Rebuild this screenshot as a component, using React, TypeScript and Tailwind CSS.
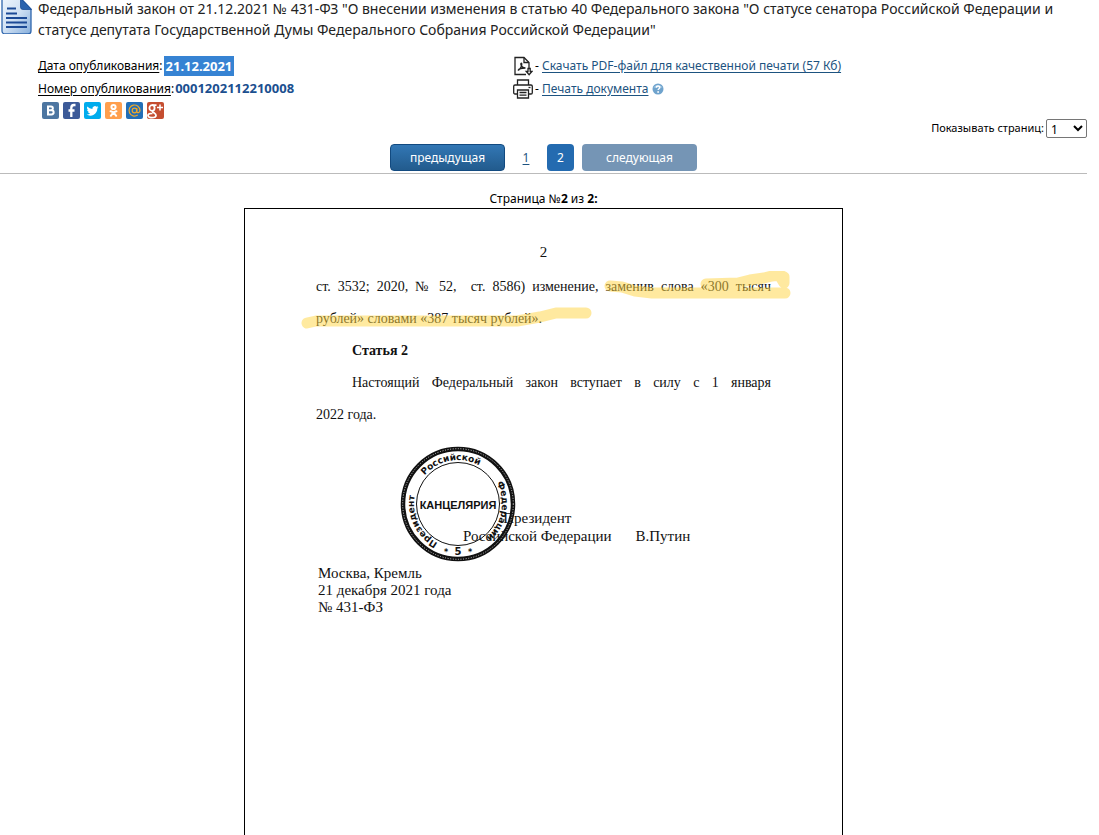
import { useState } from 'react';

function DocumentIcon() {
  return (
    <svg className="h-9 w-8 shrink-0" viewBox="0 0 32 36" fill="none" aria-hidden="true">
      <defs>
        <linearGradient id="sheet" x1="0" y1="0" x2="1" y2="1">
          <stop offset="0" stopColor="#eef5fc" />
          <stop offset="0.5" stopColor="#cfe0f3" />
          <stop offset="1" stopColor="#86aedb" />
        </linearGradient>
      </defs>
      <path d="M4 0.5H21L31 11V33a3 3 0 0 1-3 3H5a3 3 0 0 1-3-3V2.500a2 2 0 0 1 2-2Z" fill="url(#sheet)" stroke="#2f66ad" strokeWidth="1.300" />
      <path d="M20.500 0.500V9a2.500 2.500 0 0 0 2.500 2.500h8.500Z" fill="#2a63ae" stroke="#1c4f98" strokeWidth="0.800" />
      <path d="M7 10.500h9M6 15.500h11M6 20h21M6 24.500h21M6 29h21" stroke="#1c4a96" strokeWidth="2" />
    </svg>
  );
}

function PdfIcon() {
  return (
    <svg className="h-5 w-5 shrink-0" viewBox="0 0 20 20" fill="none" stroke="#222" strokeWidth="1.300" aria-hidden="true">
      <path d="M13 18.500H2V1.500h9l5 5V12" />
      <path d="M11 1.500v5h5" />
      <path d="M5 14.500c2-1 4-4.500 3.800-6.500-.2-1.300-1.300-.8-.9.500.5 2 2 3.500 4.600 3.500M5 14.500c1-2 4-2.500 7.500-2.500" />
      <path d="M15 12.500h2.200v3H19l-2.900 3.300-2.900-3.300H15Z" fill="#fff" />
    </svg>
  );
}

function PrinterIcon() {
  return (
    <svg className="h-5 w-5 shrink-0" viewBox="0 0 20 20" fill="none" stroke="#222" strokeWidth="1.300" aria-hidden="true">
      <path d="M4.500 6V1h11v5" />
      <path d="M4.500 15H2a1.300 1.300 0 0 1-1.300-1.300V7.300A1.300 1.300 0 0 1 2 6h16a1.300 1.300 0 0 1 1.300 1.300v6.400A1.300 1.300 0 0 1 18 15h-2.500" />
      <path d="M4.500 11h11v8h-11Z" />
      <path d="M6.500 13.500h7M6.500 16.200h7" />
      <path d="M15.500 8.500h2" />
    </svg>
  );
}

function HelpIcon() {
  return (
    <svg className="ml-0.5 h-3 w-3 shrink-0" viewBox="0 0 12 12" aria-hidden="true">
      <circle cx="6" cy="6" r="5.500" fill="#6fa3cd" />
      <path d="M1.500 4.500a5 4 0 0 1 9 0Z" fill="#a9cbe5" />
      <path d="M4.300 4.700c0-2.300 3.500-2.200 3.500-.2 0 1.300-1.700 1.300-1.700 2.600" fill="none" stroke="#fff" strokeWidth="1.400" />
      <circle cx="6.100" cy="9" r="0.900" fill="#fff" />
    </svg>
  );
}

const socials = [
  {
    name: 'ВКонтакте',
    color: '#4d76a1',
    icon: <path d="M6 4.500h3a1.800 1.800 0 0 1 0 3.700H6.500h3a2.100 2.100 0 0 1 0 4.300H6Z" fill="none" stroke="#fff" strokeWidth="2" />,
  },
  {
    name: 'Facebook',
    color: '#3c5a98',
    icon: <path d="M12.500 3H11C9 3 8.300 4.200 8.300 6v1.500M8.300 15V6M5.500 8.500h6" fill="none" stroke="#fff" strokeWidth="2.300" />,
  },
  {
    name: 'Twitter',
    color: '#00aced',
    icon: <path d="M14.500 5.200a5 5 0 0 1-1.400.4 2.500 2.500 0 0 0 1-1.400 5 5 0 0 1-1.500.6 2.500 2.500 0 0 0-4.200 2.200A7 7 0 0 1 3.300 4.400a2.500 2.500 0 0 0 .8 3.300 2.500 2.500 0 0 1-1.100-.3 2.500 2.500 0 0 0 2 2.400 2.500 2.500 0 0 1-1.100 0 2.500 2.500 0 0 0 2.300 1.700 5 5 0 0 1-3.600 1 7 7 0 0 0 10.700-6 5 5 0 0 0 1.200-1.300Z" fill="#fff" />,
  },
  {
    name: 'Одноклассники',
    color: '#ff9f4d',
    icon: (
      <g fill="none" stroke="#fff" strokeWidth="2" strokeLinecap="round">
        <circle cx="8.500" cy="5" r="2.100" />
        <path d="M5.500 9.200c2 1.300 4 1.300 6 0M8.500 10.300l-2.700 3.500M8.500 10.300l2.700 3.500" />
      </g>
    ),
  },
  {
    name: 'Мой Мир',
    color: '#226eb7',
    icon: (
      <g fill="none" stroke="#f0a828" strokeWidth="1.200">
        <circle cx="8.500" cy="8.500" r="2.300" />
        <path d="M10.800 6v3.500c0 1.800 3.200 1.500 3.200-1a5.500 5.500 0 1 0-2.300 4.500" />
      </g>
    ),
  },
  {
    name: 'Google+',
    color: '#c54e30',
    icon: (
      <g fill="none" stroke="#fff" strokeWidth="1.800">
        <ellipse cx="5" cy="6" rx="2.600" ry="2.800" />
        <path d="M5 3.200h4.500M6 9c-1.500 1.300 3 2 3 4.300 0 3.300-8 3-8 .3 0-1.800 2.500-2.300 4.500-2.300" />
        <path d="M13 2.500v6M10 5.500h6" strokeWidth="1.500" />
      </g>
    ),
  },
];

// Round office stamp printed over the signature
function Stamp() {
  return (
    <svg className="absolute -top-16 left-[83px] h-[118px] w-[118px]" viewBox="-59 -59 118 118" aria-hidden="true">
      <defs>
        <path id="stamp-ring" d="M0 44A44 44 0 0 1 0 -44A44 44 0 0 1 0 44" />
      </defs>
      <circle r="55" fill="none" stroke="#111" strokeWidth="4.500" />
      <circle r="55.300" fill="none" stroke="#ccc" strokeWidth="1" strokeDasharray="1 1.600" />
      <circle r="41.500" fill="none" stroke="#111" strokeWidth="1" />
      <g fontFamily="'DejaVu Sans', sans-serif" fontWeight="700" fontSize="9" fill="#111">
        <text><textPath href="#stamp-ring" startOffset="21">Президент</textPath></text>
        <text><textPath href="#stamp-ring" startOffset="100">Российской</textPath></text>
        <text><textPath href="#stamp-ring" startOffset="185">Федерации</textPath></text>
        <text y="51" fontSize="10" textAnchor="middle">5</text>
        <text x="-12" y="51" fontSize="8" textAnchor="middle">*</text>
        <text x="12" y="51" fontSize="8" textAnchor="middle">*</text>
      </g>
      <text y="5" textAnchor="middle" fontFamily="'Liberation Sans', sans-serif" fontSize="11" fontWeight="700" fill="#111">
        КАНЦЕЛЯРИЯ
      </text>
    </svg>
  );
}

function Marker() {
  return (
    <svg className="pointer-events-none absolute -left-4 top-0 h-16 w-[492px]" viewBox="300 271 492 64" fill="none" aria-hidden="true">
      <g opacity="0.500" stroke="#ffd541" strokeWidth="11" strokeLinecap="round" strokeLinejoin="round">
        <path d="M610 286L622 287L635 291L652 293H785" />
        <path d="M706 284L738 283L750 280L764 278L772 276L780 275L784 277V283L781 278" />
        <path d="M307 323L316 321H517L540 317L556 313H586" />
      </g>
    </svg>
  );
}

export default function App() {
  const [page, setPage] = useState(2);
  const [perPage, setPerPage] = useState('1');

  return (
    <div className="flex min-h-screen flex-col bg-white pr-3 font-['Noto_Sans','Open_Sans',sans-serif] text-[12px] text-black">
      <header className="-mt-0.5 flex gap-1.5">
        <DocumentIcon />
        <h1 className="text-[14px] leading-[21px] text-[#222]">
          Федеральный закон от 21.12.2021 № 431-ФЗ "О внесении изменения в статью 40 Федерального закона "О статусе сенатора Российской Федерации и статусе депутата Государственной Думы Федерального Собрания Российской Федерации"
        </h1>
      </header>

      <div className="mt-3.5 flex pl-[38px]">
        <div className="w-[475px]">
          <div className="flex h-[23px] items-center gap-px">
            <span><span className="underline underline-offset-2">Дата опубликования</span>:</span>
            <span className="bg-[#3683d3] px-0.5 text-[13px] leading-5 font-bold text-white">21.12.2021</span>
          </div>
          <div className="flex h-[23px] items-center gap-px">
            <span><span className="underline underline-offset-2">Номер опубликования</span>:</span>
            <span className="text-[13px] font-bold text-[#1b4f8f]">0001202112210008</span>
          </div>
          <div className="mt-0.5 ml-1 flex gap-1">
            {socials.map((item) => (
              <a key={item.name} href="#" aria-label={item.name}>
                <svg className="h-[17px] w-[17px]" viewBox="0 0 17 17">
                  <rect width="17" height="17" rx="2" fill={item.color} />
                  {item.icon}
                </svg>
              </a>
            ))}
          </div>
        </div>

        <div>
          <div className="flex h-[23px] items-center gap-0.5">
            <PdfIcon />
            <span>- <a href="#" className="text-[#1d5380] underline underline-offset-2">Скачать PDF-файл для качественной печати (57 Кб)</a></span>
          </div>
          <div className="flex h-[23px] items-center gap-0.5">
            <PrinterIcon />
            <span>- <a href="#" className="text-[#1d5380] underline underline-offset-2">Печать документа</a></span>
            <HelpIcon />
          </div>
        </div>
      </div>

      <div className="flex items-center justify-end gap-0.5">
        <label htmlFor="per-page" className="text-[11px]">Показывать страниц:</label>
        <select
          id="per-page"
          value={perPage}
          onChange={(e) => setPerPage(e.target.value)}
          className="h-[19px] w-[41px] rounded-xs border border-[#767676] bg-white text-[12px]"
        >
          <option>1</option>
          <option>2</option>
          <option>5</option>
        </select>
      </div>

      <nav className="mt-1.5 flex items-center justify-center border-b border-[#bbb] pb-0.5">
        <button
          onClick={() => setPage(1)}
          className="h-[27px] w-[115px] rounded-sm border border-[#124a80] bg-gradient-to-b from-[#3277b5] to-[#225b8d] text-[12px] text-white"
        >
          предыдущая
        </button>
        <a href="#" className="w-[42px] text-center text-[#1d5380] underline underline-offset-2">1</a>
        <a href="#" aria-current="page" className="h-[27px] w-[27px] rounded-sm bg-[#246bb0] text-center leading-[27px] text-white">2</a>
        <button disabled className="ml-2 h-[27px] w-[115px] rounded-sm bg-[#7595b5] text-[12px] text-white">
          следующая
        </button>
      </nav>

      <p className="mt-4 text-center leading-[18px]">
        Страница №<b>{page}</b> из <b>2:</b>
      </p>

      <main className="mx-auto w-full max-w-[599px] flex-1 border border-b-0 border-black px-[71px] pt-7 font-['Liberation_Serif',serif] text-[15px] text-[#111]">
        <div className="mb-1 text-center leading-[30px]">2</div>
        <div className="relative">
          <p className="text-justify text-[14px] leading-8">
            ст. 3532; 2020, № 52, &nbsp;ст. 8586) изменение, заменив слова «300&nbsp;тысяч рублей» словами «387 тысяч рублей».
          </p>
          <Marker />
        </div>
        <h2 className="pl-9 text-[14px] leading-8 font-bold">Статья 2</h2>
        <p className="text-[14px] leading-8">
          <span className="block pl-9 [text-align-last:justify]">
            Настоящий Федеральный закон вступает в силу с 1 января
          </span>
          2022 года.
        </p>

        <div className="relative mt-[78px] flex items-end gap-6 pl-[147px] leading-[18px]">
          <div className="text-center">
            Президент
            <br />
            Российской Федерации
          </div>
          <div>В.Путин</div>
          <Stamp />
        </div>

        <div className="mt-5 pl-0.5 leading-[17px]">
          <div>Москва, Кремль</div>
          <div>21 декабря 2021 года</div>
          <div>№ 431-ФЗ</div>
        </div>
      </main>
    </div>
  );
}
